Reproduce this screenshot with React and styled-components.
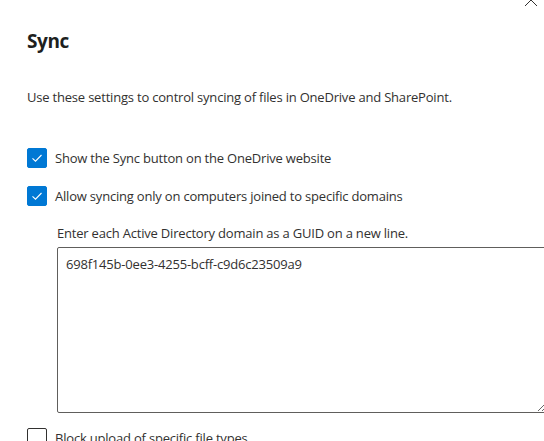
import { createGlobalStyle, styled } from 'styled-components';

const GlobalStyle = createGlobalStyle`
    html, body {
        margin:0;
        padding:0;
        background:#ffffff;
        overflow:hidden;
    }
    body {
        font-family: "Open Sans", "Noto Sans", sans-serif;
        color:#323130;
        letter-spacing:-0.2px;
    }
`

const Panel = styled.div`
    position:relative;
    width:544px;
    height:441px;
    padding:27px 0 0 27px;
    box-sizing:border-box;
    overflow:hidden;
`

const CloseButton = styled.button`
    position:absolute;
    top:-7px;
    right:6px;
    width:14px;
    height:14px;
    padding:0;
    border:none;
    background:none;
    color:#323130;
    cursor:pointer;
`

const Title = styled.h2`
    margin:0;
    font-size:19px;
    line-height:28px;
    font-weight:700;
    letter-spacing:-0.4px;
    color:#201f1e;
`

const Description = styled.p`
    margin:32px 0 0;
    font-size:13px;
    line-height:20px;
`

const Options = styled.div`
    margin-top:41px;
    display:flex;
    flex-direction:column;
    gap:18px;
`

const OptionRow = styled.label`
    display:flex;
    align-items:center;
    gap:8px;
    font-size:13px;
    line-height:20px;
    cursor:pointer;
`

const Box = styled.span`
    flex:none;
    width:20px;
    height:20px;
    box-sizing:border-box;
    border-radius:2px;
    display:flex;
    align-items:center;
    justify-content:center;
    background:${props => props.$checked ? '#0078d4' : '#ffffff'};
    border:1px solid ${props => props.$checked ? '#0078d4' : '#323130'};
`

const Nested = styled.div`
    margin:-1px 0 -3px 30px;
    display:flex;
    flex-direction:column;
    gap:4px;
`

const FieldLabel = styled.div`
    font-size:13px;
    line-height:20px;
`

const DomainInput = styled.textarea`
    width:490px;
    height:166px;
    box-sizing:border-box;
    margin:0;
    padding:6px 8px;
    border:1px solid #605e5c;
    border-radius:2px;
    font-family:inherit;
    font-size:13px;
    line-height:20px;
    letter-spacing:-0.2px;
    color:#323130;
    resize:vertical;
    outline:none;
`

function Checkbox({ checked, children }) {
    return (
        <OptionRow>
            <Box $checked={checked}>
                {checked && (
                    <svg width="12" height="12" viewBox="0 0 12 12" fill="none">
                        <path d="M1.5 6.3 L4.5 9.2 L10.5 3" stroke="#fff" strokeWidth="1.1" />
                    </svg>
                )}
            </Box>
            {children}
        </OptionRow>
    )
}

export default function App() {
    return (
        <>
            <GlobalStyle />
            <Panel>
                <CloseButton aria-label="Close">
                    <svg width="14" height="14" viewBox="0 0 14 14">
                        <path d="M1 1 L13 13 M13 1 L1 13" stroke="#323130" strokeWidth="1" />
                    </svg>
                </CloseButton>
                <Title>Sync</Title>
                <Description>Use these settings to control syncing of files in OneDrive and SharePoint.</Description>
                <Options>
                    <Checkbox checked>Show the Sync button on the OneDrive website</Checkbox>
                    <Checkbox checked>Allow syncing only on computers joined to specific domains</Checkbox>
                    <Nested>
                        <FieldLabel>Enter each Active Directory domain as a GUID on a new line.</FieldLabel>
                        <DomainInput defaultValue="698f145b-0ee3-4255-bcff-c9d6c23509a9" />
                    </Nested>
                    <Checkbox>Block upload of specific file types</Checkbox>
                </Options>
            </Panel>
        </>
    )
}
